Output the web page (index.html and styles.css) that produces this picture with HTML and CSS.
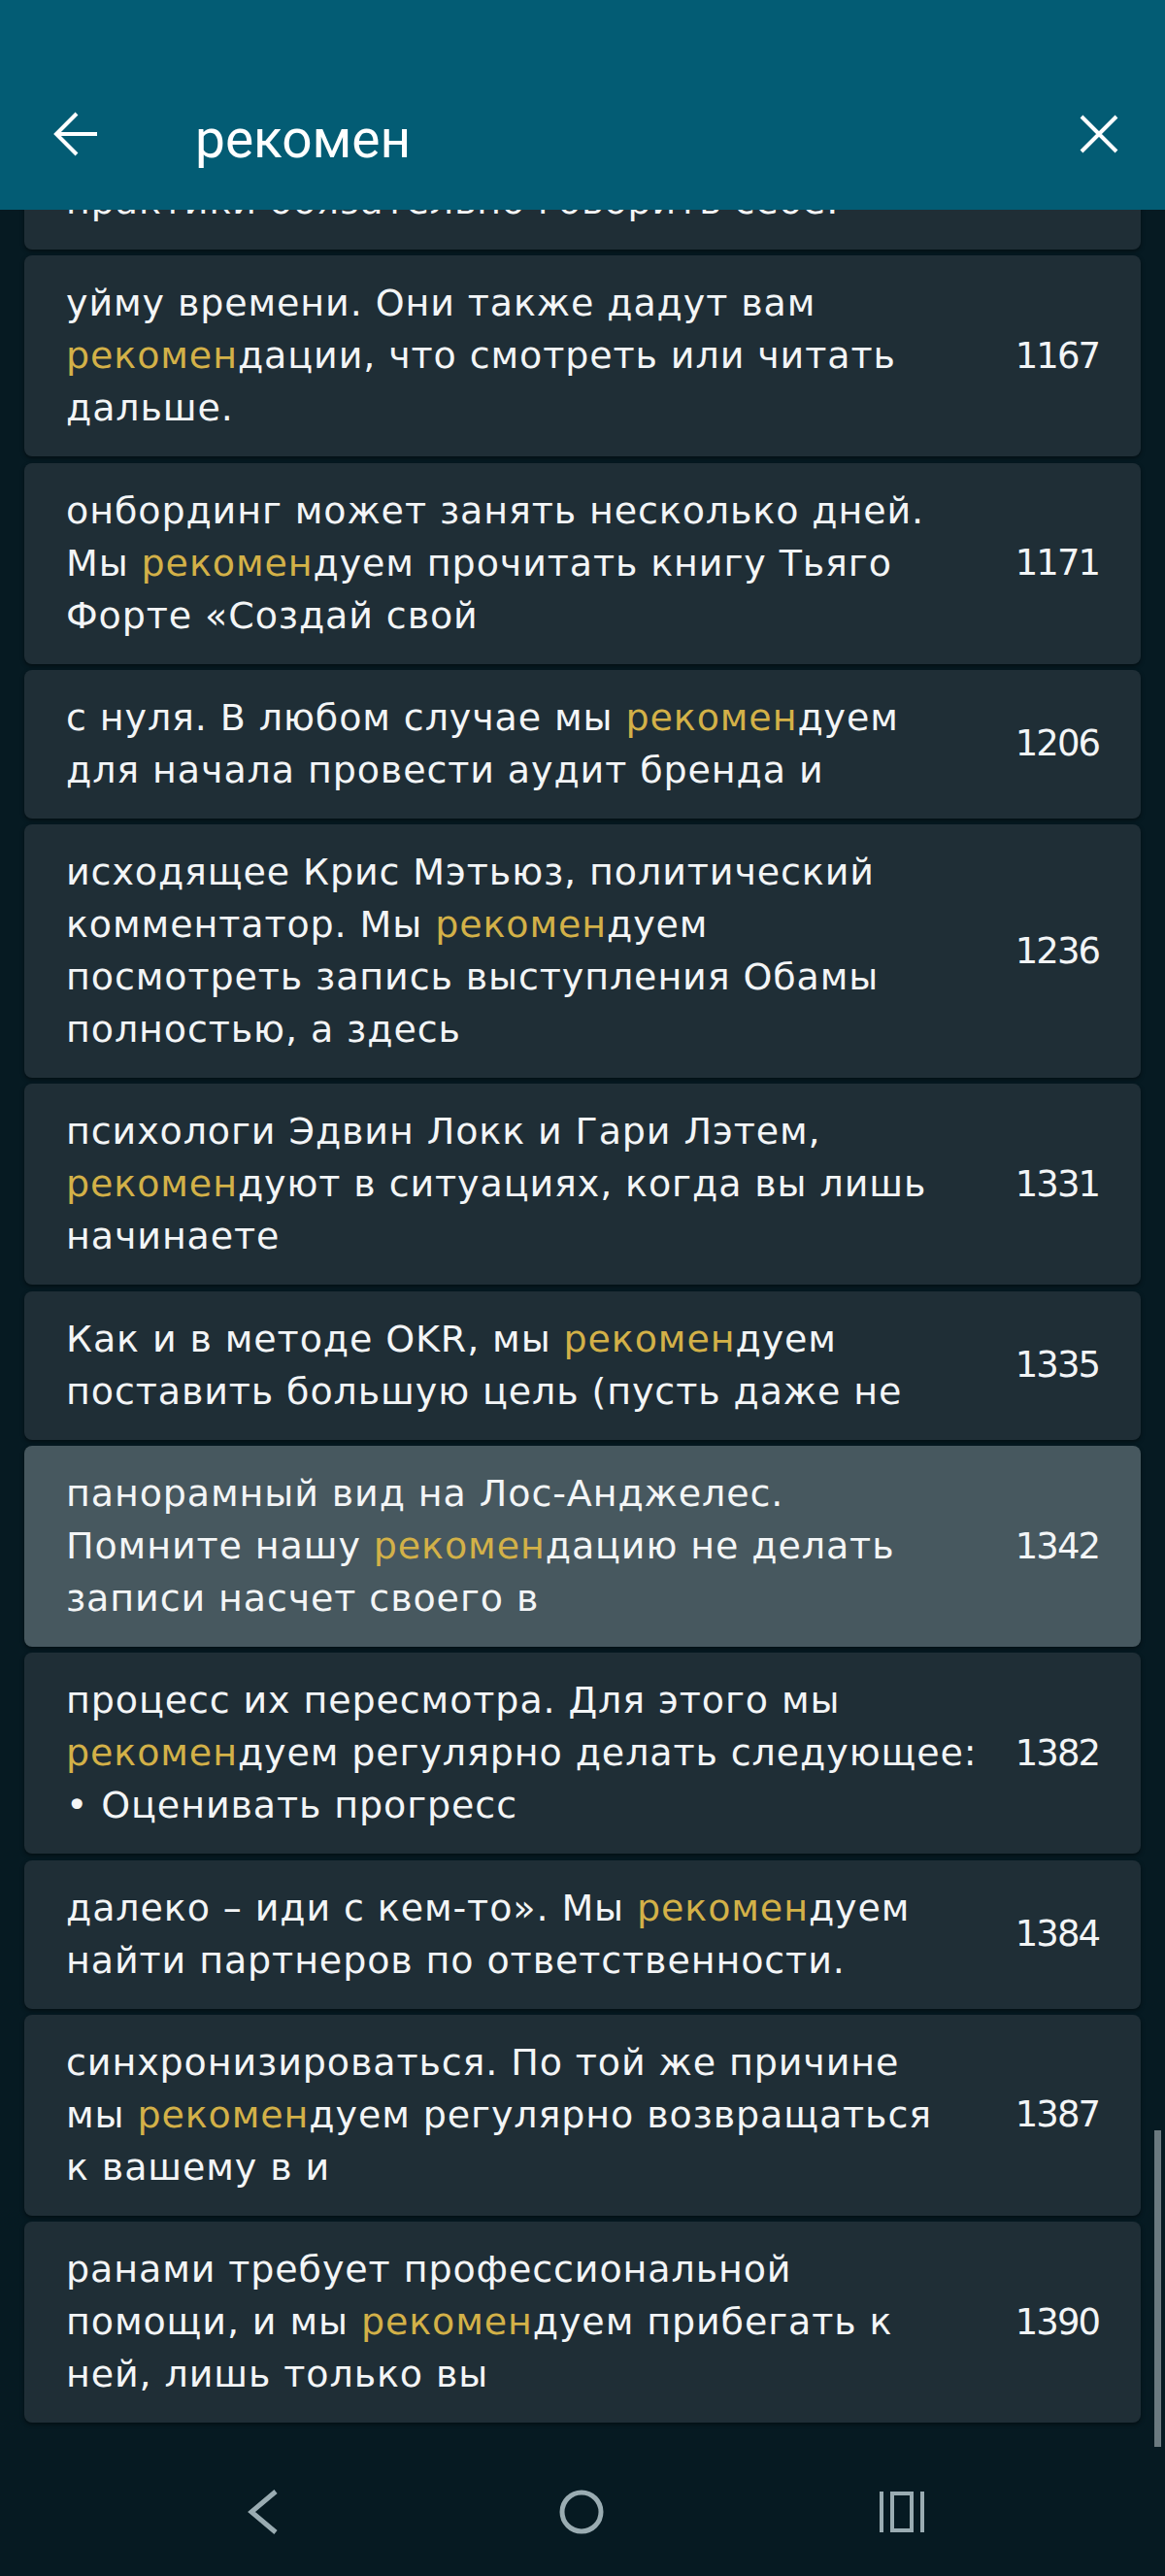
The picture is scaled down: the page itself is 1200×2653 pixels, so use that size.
FILE: index.html
```html
<!DOCTYPE html>
<html lang="ru">
<head>
    <meta charset="UTF-8">
    <meta name="viewport" content="width=device-width, initial-scale=1.0">
    <title>Поиск</title>
    <link rel="stylesheet" href="styles.css">
</head>
<body>

    <header class="appbar">
        <button class="icon-btn back" aria-label="Назад">
            <svg width="48" height="48" viewBox="0 0 48 48"><path d="M46 24H4M25 3L4 24l21 21" fill="none" stroke="#fff" stroke-width="4"/></svg>
        </button>
        <div class="query">рекомен</div>
        <button class="icon-btn clear" aria-label="Очистить">
            <svg width="40" height="40" viewBox="0 0 40 40"><path d="M2 2l36 36M38 2L2 38" fill="none" stroke="#fff" stroke-width="4"/></svg>
        </button>
    </header>

    <main class="results">
        <ul class="hits">
            <li class="hit">
                <p class="snippet">вслух. Для закрепления новой<br>практики обязательно говорить себе.</p>
                <span class="page">1163</span>
            </li>
            <li class="hit">
                <p class="snippet">уйму времени. Они также дадут вам<br><mark>рекомен</mark>дации, что смотреть или читать<br>дальше.</p>
                <span class="page">1167</span>
            </li>
            <li class="hit">
                <p class="snippet">онбординг может занять несколько дней.<br>Мы <mark>рекомен</mark>дуем прочитать книгу Тьяго<br>Форте «Создай свой</p>
                <span class="page">1171</span>
            </li>
            <li class="hit">
                <p class="snippet">с нуля. В любом случае мы <mark>рекомен</mark>дуем<br>для начала провести аудит бренда и</p>
                <span class="page">1206</span>
            </li>
            <li class="hit">
                <p class="snippet">исходящее Крис Мэтьюз, политический<br>комментатор. Мы <mark>рекомен</mark>дуем<br>посмотреть запись выступления Обамы<br>полностью, а здесь</p>
                <span class="page">1236</span>
            </li>
            <li class="hit">
                <p class="snippet">психологи Эдвин Локк и Гари Лэтем,<br><mark>рекомен</mark>дуют в ситуациях, когда вы лишь<br>начинаете</p>
                <span class="page">1331</span>
            </li>
            <li class="hit">
                <p class="snippet">Как и в методе OKR, мы <mark>рекомен</mark>дуем<br>поставить большую цель (пусть даже не</p>
                <span class="page">1335</span>
            </li>
            <li class="hit active">
                <p class="snippet">панорамный вид на Лос-Анджелес.<br>Помните нашу <mark>рекомен</mark>дацию не делать<br>записи насчет своего в</p>
                <span class="page">1342</span>
            </li>
            <li class="hit">
                <p class="snippet">процесс их пересмотра. Для этого мы<br><mark>рекомен</mark>дуем регулярно делать следующее:<br>• Оценивать прогресс</p>
                <span class="page">1382</span>
            </li>
            <li class="hit">
                <p class="snippet">далеко – иди с кем-то». Мы <mark>рекомен</mark>дуем<br>найти партнеров по ответственности.</p>
                <span class="page">1384</span>
            </li>
            <li class="hit">
                <p class="snippet">синхронизироваться. По той же причине<br>мы <mark>рекомен</mark>дуем регулярно возвращаться<br>к вашему в и</p>
                <span class="page">1387</span>
            </li>
            <li class="hit">
                <p class="snippet">ранами требует профессиональной<br>помощи, и мы <mark>рекомен</mark>дуем прибегать к<br>ней, лишь только вы</p>
                <span class="page">1390</span>
            </li>
        </ul>
        <div class="scrollbar"></div>
    </main>

    <nav class="sysnav">
        <button class="icon-btn" aria-label="Назад">
            <svg width="40" height="48" viewBox="0 0 40 48"><path d="M32 3L7 24l25 21" fill="none" stroke="#9aacb2" stroke-width="5"/></svg>
        </button>
        <button class="icon-btn" aria-label="Домой">
            <svg width="48" height="48" viewBox="0 0 48 48"><circle cx="24" cy="24" r="20" fill="none" stroke="#9aacb2" stroke-width="5"/></svg>
        </button>
        <button class="icon-btn" aria-label="Недавние">
            <svg width="46" height="42" viewBox="0 0 46 42"><path d="M2 0v42M44 0v42" stroke="#9aacb2" stroke-width="4"/><rect x="13" y="2" width="20" height="38" fill="none" stroke="#9aacb2" stroke-width="4"/></svg>
        </button>
    </nav>

</body>
</html>
```

FILE: styles.css
```css
body {
    margin: 0;
    background: #061a22;
    color: #f3f5f6;
    font-family: 'DejaVu Sans', sans-serif;
}
.icon-btn {
    background: none;
    border: none;
    padding: 0;
    display: flex;
    cursor: pointer;
}
.appbar {
    height: 216px;
    box-sizing: border-box;
    padding: 60px 48px 0 54px;
    background: #035c74;
    display: flex;
    align-items: center;
}
.query {
    flex: 1;
    margin-left: 99px;
    padding-top: 10px;
    font-family: Roboto, sans-serif;
    font-size: 55px;
    color: #fff;
}
.results {
    position: relative;
    height: 2304px;
    overflow: hidden;
}
.hits {
    list-style: none;
    margin: -112px 25px 0;
    padding: 0;
    display: flex;
    flex-direction: column;
    gap: 6.3px;
}
.hit {
    display: flex;
    align-items: center;
    padding: 22px 43px 23px;
    background: #1f2e36;
    border-radius: 8px;
    box-shadow: 0 2px 4px rgba(0, 0, 0, 0.45);
}
.hit.active {
    background: #47585f;
}
.snippet {
    flex: 1;
    margin: 0;
    font-size: 38px;
    letter-spacing: 0.9px;
    line-height: 54px;
    white-space: nowrap;
}
mark {
    background: none;
    color: #d3b148;
}
.page {
    font-size: 37px;
    letter-spacing: -2px;
}
.scrollbar {
    position: absolute;
    top: 1978px;
    bottom: 0;
    right: 4px;
    width: 7px;
    background: #6b7a80;
}
.sysnav {
    height: 133px;
    display: flex;
    align-items: center;
    justify-content: space-between;
    padding: 0 248px 0 252px;
}
```
